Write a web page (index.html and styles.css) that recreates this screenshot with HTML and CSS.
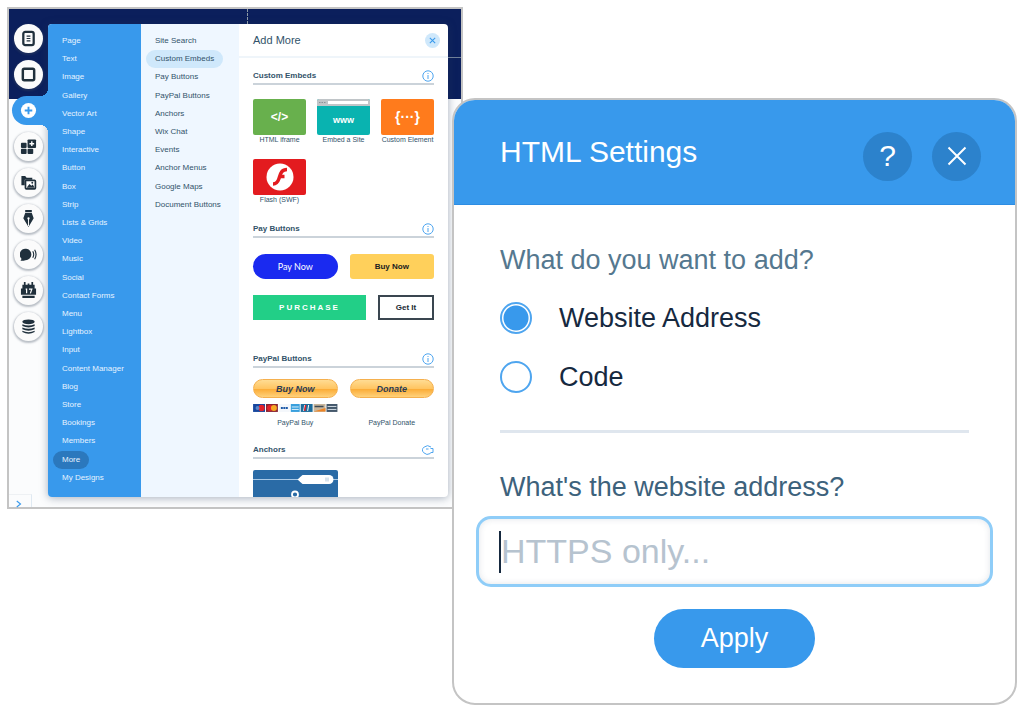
FILE: index.html
```html
<!DOCTYPE html>
<html lang="en">
<head>
    <meta charset="UTF-8">
    <meta name="viewport" content="width=device-width, initial-scale=1.0">
    <title>HTML Settings</title>
    <link rel="stylesheet" href="styles.css">
</head>
<body>
    <main class="stage">
        <section class="editor">
            <nav class="rail" aria-label="Editor tools">
                <button class="tool" aria-label="Pages">
                    <svg viewBox="0 0 18 18"><rect x="3.5" y="2" width="11" height="14" rx="2" fill="none" stroke="#20303c" stroke-width="2.4"/><path d="M7 6.5h4M7 9h4M7 11.5h4" stroke="#20303c" stroke-width="1.2"/></svg>
                </button>
                <button class="tool" aria-label="Background">
                    <svg viewBox="0 0 18 18"><rect x="3" y="3" width="12" height="12" rx="1.5" fill="none" stroke="#20303c" stroke-width="2.6"/></svg>
                </button>
                <button class="tool active" aria-label="Add">
                    <svg viewBox="0 0 18 18"><circle cx="9" cy="9" r="8" fill="#fff"/><path d="M9 5v8M5 9h8" stroke="#3899ec" stroke-width="2"/></svg>
                </button>
                <button class="tool" aria-label="Apps">
                    <svg viewBox="0 0 18 18" fill="#20303c"><rect x="1" y="5" width="6" height="5.500" rx="1"/><rect x="1" y="11.500" width="6" height="5.500" rx="1"/><rect x="8" y="11.500" width="6" height="5.500" rx="1"/><rect x="8" y="1.500" width="9" height="9" rx="1"/><path d="M12.500 3.500v5M10 6h5" stroke="#fff" stroke-width="1.500"/></svg>
                </button>
                <button class="tool" aria-label="Media">
                    <svg viewBox="0 0 18 18"><path d="M1.500 11V2h4l1.500 2h6v2H5v6H1.500z" fill="#20303c"/><rect x="5.800" y="6.800" width="10.500" height="9" rx="1" fill="#fff" stroke="#20303c" stroke-width="1.800"/><path d="M7 14.500l3-4 2 2 1.500-1.500 2 3.500z" fill="#20303c"/><circle cx="13" cy="9.300" r="1" fill="#20303c"/></svg>
                </button>
                <button class="tool" aria-label="Blog">
                    <svg viewBox="0 0 18 18"><path d="M5.500 0h7v2.500h-7zM5.500 3.300h7l2 5.500L9 18 3.500 8.800z" fill="#20303c"/><path d="M9 17V9" stroke="#fff" stroke-width="1"/><circle cx="9" cy="9" r="1.200" fill="#fff"/></svg>
                </button>
                <button class="tool" aria-label="Chat">
                    <svg viewBox="0 0 18 18"><path d="M6.500 3a6 6 0 1 1-1 12c-1.500.8-3 .9-5 .5 1-.8 1.200-1.500.8-2.500A6 6 0 0 1 6.500 3z" fill="#20303c"/><path d="M13.500 5.500q2 3.500 0 7M15.500 4q3 5 0 10" fill="none" stroke="#20303c" stroke-width="1.200"/></svg>
                </button>
                <button class="tool" aria-label="Bookings">
                    <svg viewBox="0 0 18 18"><path d="M2.500 3h13v4.500h-13zM1 7h16v6.500H1zM2.500 14.500h13V17h-13z" fill="#20303c"/><path d="M5 0v4M9 1.500v3M13 0v4" stroke="#20303c" stroke-width="1.800"/><path d="M6 7.500h1v4.500M9.500 7.500h3L11 12" fill="none" stroke="#fff" stroke-width="1.300"/></svg>
                </button>
                <button class="tool" aria-label="Database">
                    <svg viewBox="0 0 18 18"><ellipse cx="9" cy="4" rx="6.500" ry="2.500" fill="#20303c"/><path d="M2.500 6.500q6.500 3 13 0v2q-6.500 3-13 0zM2.500 10q6.500 3 13 0v2q-6.500 3-13 0zM2.500 13.500q6.500 3 13 0v1.300q-6.500 3.500-13 0z" fill="#20303c"/></svg>
                </button>
                <button class="expand" aria-label="Expand">
                    <svg viewBox="0 0 8 10"><path d="M1 1l5 4-5 4" fill="none" stroke="#3899ec" stroke-width="1.500"/></svg>
                </button>
            </nav>

            <div class="panel">
                <ul class="menu main-menu">
                    <li><a href="#">Page</a></li>
                    <li><a href="#">Text</a></li>
                    <li><a href="#">Image</a></li>
                    <li><a href="#">Gallery</a></li>
                    <li><a href="#">Vector Art</a></li>
                    <li><a href="#">Shape</a></li>
                    <li><a href="#">Interactive</a></li>
                    <li><a href="#">Button</a></li>
                    <li><a href="#">Box</a></li>
                    <li><a href="#">Strip</a></li>
                    <li><a href="#">Lists &amp; Grids</a></li>
                    <li><a href="#">Video</a></li>
                    <li><a href="#">Music</a></li>
                    <li><a href="#">Social</a></li>
                    <li><a href="#">Contact Forms</a></li>
                    <li><a href="#">Menu</a></li>
                    <li><a href="#">Lightbox</a></li>
                    <li><a href="#">Input</a></li>
                    <li><a href="#">Content Manager</a></li>
                    <li><a href="#">Blog</a></li>
                    <li><a href="#">Store</a></li>
                    <li><a href="#">Bookings</a></li>
                    <li><a href="#">Members</a></li>
                    <li><a href="#" class="selected">More</a></li>
                    <li><a href="#">My Designs</a></li>
                </ul>

                <ul class="menu sub-menu">
                    <li><a href="#">Site Search</a></li>
                    <li><a href="#" class="selected">Custom Embeds</a></li>
                    <li><a href="#">Pay Buttons</a></li>
                    <li><a href="#">PayPal Buttons</a></li>
                    <li><a href="#">Anchors</a></li>
                    <li><a href="#">Wix Chat</a></li>
                    <li><a href="#">Events</a></li>
                    <li><a href="#">Anchor Menus</a></li>
                    <li><a href="#">Google Maps</a></li>
                    <li><a href="#">Document Buttons</a></li>
                </ul>

                <div class="catalog">
                    <header class="catalog-head">
                        <h2>Add More</h2>
                        <button class="close-small" aria-label="Close panel">
                            <svg viewBox="0 0 14 14"><path d="M4.500 4.500l5 5M9.500 4.500l-5 5" stroke="#3899ec"/></svg>
                        </button>
                    </header>

                    <section class="group">
                        <h3>Custom Embeds
                            <svg class="info" viewBox="0 0 12 12"><circle cx="6" cy="6" r="5.200"/><path d="M6 5v4M6 3v1"/></svg>
                        </h3>
                        <div class="tiles">
                            <div class="tile"><button class="thumb green" aria-label="HTML iframe">&lt;/&gt;</button><span>HTML iframe</span></div>
                            <div class="tile">
                                <button class="thumb teal" aria-label="Embed a Site">
                                    <svg class="browser-bar" viewBox="0 0 53 7" preserveAspectRatio="none"><path d="M0 0h53v7H0z" fill="#c0c5c8"/><path d="M11 2h40v3H11z" fill="#fff"/><path d="M2 3.500h7" stroke="#8b9398" stroke-dasharray="1.500 1"/></svg>
                                    <b>www</b>
                                </button>
                                <span>Embed a Site</span>
                            </div>
                            <div class="tile"><button class="thumb orange" aria-label="Custom Element">{···}</button><span>Custom Element</span></div>
                            <div class="tile"><button class="thumb red" aria-label="Flash (SWF)">
                                <svg viewBox="0 0 28 28"><circle cx="14" cy="14" r="13.500" fill="#fff"/><path d="M21 6.500c-6 0-6.500 5-8 9-1 3-2.500 5.500-6 5.500M12.500 13.500h6" fill="none" stroke="#e31b1f" stroke-width="3.500"/></svg>
                            </button><span>Flash (SWF)</span></div>
                        </div>
                    </section>

                    <section class="group pay">
                        <h3>Pay Buttons
                            <svg class="info" viewBox="0 0 12 12"><circle cx="6" cy="6" r="5.200"/><path d="M6 5v4M6 3v1"/></svg>
                        </h3>
                        <div class="pair">
                            <button class="pay-btn pay-now">Pay Now</button>
                            <button class="pay-btn buy-now">Buy Now</button>
                        </div>
                        <div class="pair wide-first">
                            <button class="pay-btn purchase">PURCHASE</button>
                            <button class="pay-btn get-it">Get It</button>
                        </div>
                    </section>

                    <section class="group paypal">
                        <h3>PayPal Buttons
                            <svg class="info" viewBox="0 0 12 12"><circle cx="6" cy="6" r="5.200"/><path d="M6 5v4M6 3v1"/></svg>
                        </h3>
                        <div class="pair">
                            <div class="paypal-item">
                                <button class="gold">Buy Now</button>
                                <svg class="cards" viewBox="0 0 85 8">
                                    <rect width="12" height="8" fill="#17479e"/><circle cx="8.500" cy="4" r="3.200" fill="#e2212b"/><circle cx="4.500" cy="4" r="2" fill="#5b88c9"/>
                                    <rect x="13" width="12" height="8" fill="#8a2432"/><circle cx="17" cy="4" r="3" fill="#e2212b"/><circle cx="21" cy="4" r="3" fill="#f7a823"/>
                                    <rect x="26" width="11" height="8" fill="#f4f7fb"/><path d="M28 4h7" stroke="#1e5aa8" stroke-width="2" stroke-dasharray="2 .5"/>
                                    <rect x="38" width="9" height="8" fill="#3aa0dd"/><path d="M39 3h7M39 5.500h7" stroke="#d8effb"/>
                                    <rect x="48" width="12" height="8" fill="#1d6d9c"/><path d="M51 7l1-6M55 7l1-6" stroke="#fff"/><path d="M52 7l1-6" stroke="#e2212b" stroke-width="1.500"/>
                                    <rect x="61" width="12" height="8" fill="#c9b79d"/><path d="M61 7.500h12V4z" fill="#ee8526"/><path d="M62 2.500h9" stroke="#3e4a55" stroke-width="1.500"/>
                                    <rect x="74" width="11" height="8" fill="#44586b"/><path d="M75 2.500h9M75 5.500h9" stroke="#d0dae2"/>
                                </svg>
                                <span>PayPal Buy</span>
                            </div>
                            <div class="paypal-item">
                                <button class="gold">Donate</button>
                                <span>PayPal Donate</span>
                            </div>
                        </div>
                    </section>

                    <section class="group anchors">
                        <h3>Anchors
                            <svg class="info" viewBox="0 0 12 12"><path d="M8.500 9.500A5 4.200 0 1 1 9 3M8.500 4.500h2.500v4H8.500M4 5h2.500"/></svg>
                        </h3>
                        <svg class="anchor-card" viewBox="0 0 85 27">
                            <path d="M0 27V2q0-2 2-2h81q2 0 2 2v25z" fill="#2a6ba6"/>
                            <path d="M0 9.500h85" stroke="#a9c9e6"/>
                            <path d="M44.500 9.500l5-4.500H76a4.500 4.500 0 0 1 0 9H49.500z" fill="#fff"/>
                            <path d="M73 7.500v4M75 7.500v4" stroke="#9db9d2" stroke-width=".8"/>
                            <circle cx="42" cy="24.500" r="3" fill="none" stroke="#fff" stroke-width="1.800"/>
                        </svg>
                    </section>
                </div>
            </div>
        </section>

        <form class="dialog">
            <header class="dialog-head">
                <h1>HTML Settings</h1>
                <button type="button" class="round" aria-label="Help">?</button>
                <button type="button" class="round" aria-label="Close">
                    <svg viewBox="0 0 20 20"><path d="M1.500 1.500l17 17M18.500 1.500l-17 17" stroke="#fff" stroke-width="2"/></svg>
                </button>
            </header>
            <div class="dialog-body">
                <fieldset>
                    <legend>What do you want to add?</legend>
                    <label class="option"><input type="radio" name="source" checked>Website Address</label>
                    <label class="option"><input type="radio" name="source">Code</label>
                </fieldset>
                <label class="question" for="address">What's the website address?</label>
                <div class="field">
                    <input type="text" id="address" placeholder="HTTPS only...">
                    <span class="caret"></span>
                </div>
                <button type="button" class="apply">Apply</button>
            </div>
        </form>
    </main>
</body>
</html>
```

FILE: styles.css
```css
* {
    box-sizing: border-box;
}
body {
    margin: 0;
    padding: 7px;
    background: #fff;
    font-family: "Liberation Sans", Arial, sans-serif;
    color: #32536a;
}
button, input {
    font-family: inherit;
}
button {
    padding: 0;
    border: none;
    background: none;
    cursor: pointer;
}
h1, h2, h3, ul {
    margin: 0;
    padding: 0;
    font-weight: normal;
}
svg {
    display: block;
}
/* the dialog shares the middle column with the editor and covers its edge */
.stage {
    display: grid;
    grid-template-columns: 445fr 11fr 554fr;
    align-items: start;
}

/* Editor */
.editor {
    position: relative;
    grid-column: 1 / 3;
    grid-row: 1;
    display: flex;
    padding: 15px 13px 0 0;
    border: 2px solid #c4c4c4;
    background: linear-gradient(#0b1f5c 90px, #fbfcfd 90px);
}
.editor::before {
    content: "";
    position: absolute;
    top: 0;
    left: 238px;
    height: 15px;
    border-left: 1px dashed #8d9aa5;
}
.editor::after {
    content: "";
    position: absolute;
    top: 48px;
    right: 0;
    width: 13px;
    border-top: 1px solid #6f7f98;
}
.rail {
    flex: none;
    width: 39px;
    display: flex;
    flex-direction: column;
    align-items: center;
    gap: 7px;
}
.tool {
    position: relative;
    flex: none;
    width: 29px;
    height: 29px;
    display: flex;
    align-items: center;
    justify-content: center;
    border-radius: 50%;
    background: #fbfbfb;
    box-shadow: 0 1px 2px 1px rgba(60, 75, 95, 0.35);
}
.tool svg {
    width: 17px;
    height: 17px;
}
.tool.active {
    align-self: flex-end;
    width: 36px;
    padding-right: 4px;
    border-radius: 15px 0 0 15px;
    background: #3899ec;
    box-shadow: none;
}
.tool.active::before,
.tool.active::after {
    content: "";
    position: absolute;
    right: 0;
    width: 8px;
    height: 8px;
}
.tool.active::before {
    bottom: 100%;
    background: radial-gradient(circle at 0 0, transparent 8px, #3899ec 8px);
}
.tool.active::after {
    top: 100%;
    background: radial-gradient(circle at 0 100%, transparent 8px, #3899ec 8px);
}
.expand {
    align-self: flex-start;
    width: 23px;
    height: 13px;
    margin-top: auto;
    padding: 5px 0 0 7px;
    border-top: 1px solid #eef1f4;
    border-right: 1px solid #dfe9f2;
}
.expand svg {
    width: 6px;
    height: 8px;
}
.panel {
    flex: 1;
    display: grid;
    grid-template-columns: 93fr 98fr 209fr;
    margin-bottom: 10px;
    border-radius: 4px;
    overflow: hidden;
    background: #fff;
    box-shadow: 0 1px 8px rgba(40, 60, 90, 0.4);
}
.menu {
    display: grid;
    grid-template-rows: repeat(25, 1fr);
    padding: 8px 0 10px 5px;
    list-style: none;
    font-size: 8px;
    white-space: nowrap;
}
.menu li {
    display: flex;
    align-items: center;
}
.menu a {
    padding: 0 9px;
    border-radius: 9px;
    line-height: 18px;
    color: inherit;
    text-decoration: none;
}
.main-menu {
    background: #3899ec;
    color: #e6f3ff;
}
.main-menu .selected {
    background: #2b78bd;
}
.sub-menu {
    background: #eff7ff;
}
.sub-menu .selected {
    background: #cfe8fb;
}

/* Catalog */
.catalog {
    min-width: 0;
}
.catalog-head {
    display: flex;
    align-items: center;
    justify-content: space-between;
    height: 34px;
    padding: 0 8px 0 14px;
    border-bottom: 2px solid #eff5fa;
}
.catalog-head h2 {
    font-size: 11px;
}
.close-small {
    width: 15px;
    height: 15px;
    border-radius: 50%;
    background: #cfe8fb;
}
.group {
    padding: 10px 14px 0 14px;
}
.group h3 {
    display: flex;
    align-items: center;
    justify-content: space-between;
    height: 17px;
    border-bottom: 2px solid #cbd3da;
    font-size: 8px;
    font-weight: bold;
}
.info {
    width: 12px;
    height: 12px;
    fill: none;
    stroke: #4ea5ef;
}
.tiles {
    display: grid;
    grid-template-columns: repeat(3, 1fr);
    gap: 14px 11px;
    padding-top: 14px;
}
.tile {
    display: flex;
    flex-direction: column;
    align-items: center;
    font-size: 7px;
    line-height: 10px;
    white-space: nowrap;
}
.thumb {
    width: 100%;
    height: 36px;
    display: flex;
    align-items: center;
    justify-content: center;
    border-radius: 2px;
    overflow: hidden;
    color: #fff;
    font-size: 12px;
    font-weight: bold;
}
.thumb svg {
    width: 28px;
    height: 28px;
}
.green {
    background: #68b04d;
}
.teal {
    flex-direction: column;
    justify-content: flex-start;
    background: #09b3b0;
    font-size: 9px;
}
.teal .browser-bar {
    flex: none;
    width: 100%;
    height: 7px;
}
.teal b {
    line-height: 28px;
}
.orange {
    background: #ff7b1c;
    font-size: 14px;
}
.red {
    background: #e31b1f;
}
.pay {
    padding-top: 16px;
}
.pair {
    display: grid;
    grid-template-columns: 1fr 1fr;
    gap: 12px;
    padding-top: 16px;
}
.wide-first {
    grid-template-columns: 113fr 56fr;
}
.pay-btn {
    height: 25px;
    font-size: 8px;
    font-weight: bold;
}
.pay-now {
    border-radius: 13px;
    background: #1a2af0;
    color: #fff;
    font-family: Lato, sans-serif;
    font-size: 9px;
    font-weight: normal;
}
.buy-now {
    border-radius: 3px;
    background: #ffd05b;
    color: #202020;
}
.purchase {
    background: #22cf87;
    color: #fff;
    letter-spacing: 2px;
}
.get-it {
    border: 2px solid #3a4650;
    color: #202a33;
}
.paypal {
    padding-top: 31px;
}
.paypal .pair {
    padding-top: 11px;
}
.paypal-item {
    display: flex;
    flex-direction: column;
    align-items: center;
    justify-content: space-between;
    height: 49px;
    font-size: 7px;
    line-height: 10px;
}
.gold {
    width: 100%;
    height: 19px;
    border: 1px solid #f5b04e;
    border-radius: 10px;
    background: linear-gradient(#ffdc93, #ffc562 50%, #fbaa33 52%, #ffd27c);
    color: #2a3c55;
    font-size: 9px;
    font-weight: bold;
    font-style: italic;
}
.cards {
    width: 100%;
}
.anchors {
    padding-top: 14px;
}
.anchor-card {
    width: 85px;
    height: 27px;
    margin-top: 11px;
}

/* Dialog */
.dialog {
    grid-column: 2 / 4;
    grid-row: 1;
    z-index: 1;
    margin-top: 91px;
    border: 2px solid #c4c4c4;
    border-radius: 23px;
    overflow: hidden;
    background: #fff;
    font-size: 27px;
}
.dialog-head {
    display: flex;
    align-items: center;
    gap: 20px;
    height: 105px;
    padding: 8px 34px 0 46px;
    border-bottom: 1px solid #2d8de3;
    background: #3899ec;
    color: #fff;
}
.dialog-head h1 {
    flex: 1;
    padding-bottom: 8px;
    font-size: 30px;
}
.round {
    width: 49px;
    height: 49px;
    display: flex;
    align-items: center;
    justify-content: center;
    border-radius: 50%;
    background: #2c82cc;
    color: #fff;
    font-size: 30px;
}
.round svg {
    width: 20px;
    height: 20px;
}
.dialog-body {
    display: flex;
    flex-direction: column;
    padding: 38px 22px 35px;
}
fieldset {
    margin: 0 24px;
    padding: 0 0 37px;
    border: none;
    border-bottom: 3px solid #dfe6ee;
}
legend {
    padding: 0;
    line-height: 34px;
    color: #55788f;
}
.option {
    display: flex;
    align-items: center;
    gap: 27px;
    margin-top: 25px;
    line-height: 32px;
    color: #16293f;
}
.option input {
    appearance: none;
    width: 32px;
    height: 32px;
    margin: 0;
    border: 2px solid #4ea5ef;
    border-radius: 50%;
}
.option input:checked {
    background: radial-gradient(circle, #3899ec 12px, #fff 13px);
}
.option + .option {
    margin-top: 27px;
}
.question {
    margin: 37px 24px 12px;
    line-height: 34px;
    color: #3d627c;
}
.field {
    position: relative;
}
.field input {
    display: block;
    width: 100%;
    height: 71px;
    padding: 0 22px;
    border: 3px solid #8fcdf8;
    border-radius: 15px;
    outline: none;
    background: #fff;
    box-shadow: inset 0 0 6px rgba(60, 80, 110, 0.15);
    font-size: 34px;
}
.field input::placeholder {
    color: #b6c3cf;
    opacity: 1;
}
.caret {
    position: absolute;
    top: 15px;
    left: 23px;
    width: 2px;
    height: 42px;
    background: #16293f;
}
.apply {
    align-self: center;
    margin-top: 22px;
    padding: 0 47px;
    border-radius: 30px;
    background: #3899ec;
    color: #fff;
    font-size: 27px;
    line-height: 59px;
}
```
